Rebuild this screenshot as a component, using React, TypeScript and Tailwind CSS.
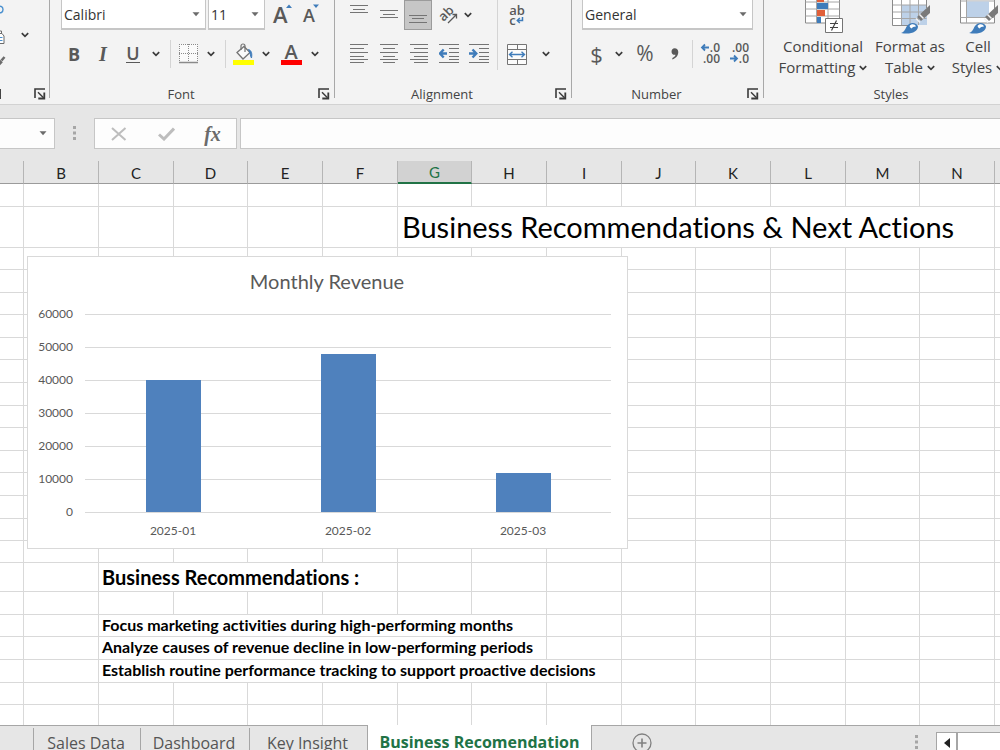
import React from 'react';
import clsx from 'clsx';

const UI_FONT = "font-['Open_Sans',sans-serif]";
const CELL_FONT = "font-['Lato',sans-serif] [font-variant-ligatures:none]";

const COLUMNS = ['A', 'B', 'C', 'D', 'E', 'F', 'G', 'H', 'I', 'J', 'K', 'L', 'M', 'N', 'O', 'P', 'Q', 'R'];
const ACTIVE_COLUMN = 'G';

interface SheetCell {
  start: number;
  span: number;
  text: string;
  className: string;
}

interface SheetRow {
  height: string;
  cell?: SheetCell;
}

const BODY_TEXT = 'text-[16px] leading-[18px] font-bold pl-[3px] pb-[2px]';

const ROWS: SheetRow[] = [
  { height: 'h-[23px]' },
  {
    height: 'h-[41px]',
    cell: { start: 6, span: 8, text: 'Business Recommendations & Next Actions', className: 'text-[29px] leading-[36px] pl-1' },
  },
  { height: 'h-[22px]' },
  { height: 'h-[23px]' },
  { height: 'h-[22px]' },
  { height: 'h-[23px]' },
  { height: 'h-[22px]' },
  { height: 'h-[23px]' },
  { height: 'h-[23px]' },
  { height: 'h-[22px]' },
  { height: 'h-[23px]' },
  { height: 'h-[22px]' },
  { height: 'h-[23px]' },
  { height: 'h-[23px]' },
  { height: 'h-[22px]' },
  { height: 'h-[22px]' },
  {
    height: 'h-[29px]',
    cell: { start: 2, span: 4, text: 'Business Recommendations :', className: 'text-[20px] leading-[26px] font-bold pl-[3px]' },
  },
  { height: 'h-[23px]' },
  {
    height: 'h-[22px]',
    cell: { start: 2, span: 6, text: 'Focus marketing activities during high-performing months', className: BODY_TEXT },
  },
  {
    height: 'h-[23px]',
    cell: { start: 2, span: 6, text: 'Analyze causes of revenue decline in low-performing periods', className: BODY_TEXT },
  },
  {
    height: 'h-[23px]',
    cell: { start: 2, span: 7, text: 'Establish routine performance tracking to support proactive decisions', className: BODY_TEXT },
  },
  { height: 'h-[22px]' },
  { height: 'h-[23px]' },
  { height: 'h-[23px]' },
];

const REVENUE = [
  { month: '2025-01', value: 40000 },
  { month: '2025-02', value: 48000 },
  { month: '2025-03', value: 12000 },
];

const columnWidth = (index: number) => {
  if (index === 0) return 'w-[24px]';
  return index % 3 === 0 ? 'w-[74px]' : 'w-[75px]';
};

const Chevron = () => (
  <svg width="8" height="6" viewBox="0 0 8 6" fill="none" stroke="#3b3b3b" strokeWidth="1.7" className="shrink-0">
    <path d="M0.8 1.2 4 4.4 7.2 1.2" />
  </svg>
);

const ChevronButton = ({ label, className }: { label: string; className: string }) => (
  <button aria-label={label} className={clsx('flex h-7 shrink-0 items-center justify-center', className)}>
    <Chevron />
  </button>
);

const IconButton = ({ label, className, children }: { label: string; className: string; children: React.ReactNode }) => (
  <button aria-label={label} className={clsx('flex h-7 shrink-0 items-center justify-center text-[#595959]', className)}>
    {children}
  </button>
);

const Separator = ({ className }: { className: string }) => (
  <div className={clsx('h-7 w-px shrink-0 bg-[#d4d4d4]', className)} />
);

const Divider = () => <div className="h-[98px] w-px shrink-0 bg-[#a8a8a8]" />;

const Launcher = ({ label }: { label: string }) => (
  <button aria-label={label} className="shrink-0">
    <svg width="12" height="12" viewBox="0 0 12 12" fill="none" stroke="#3a3a3a">
      <path d="M1 10V1h10" strokeWidth="1.6" />
      <path d="M4 4.2 9.5 9.7" strokeWidth="1.4" />
      <path d="M10.3 4.5v6H4.3" strokeWidth="1.8" />
    </svg>
  </button>
);

const GroupLabel = ({ name, launcher = true }: { name: string; launcher?: boolean }) => (
  <div className="mt-1.5 flex h-5 items-center">
    <span className="flex-1 text-center text-[13px] leading-5 text-[#444]">{name}</span>
    {launcher && (
      <div className="mr-1 ml-1.5 flex">
        <Launcher label={`${name} settings`} />
      </div>
    )}
  </div>
);

const Combo = ({ label, value, className }: { label: string; value: string; className: string }) => (
  <div className={clsx('relative h-[30px] shrink-0', className)}>
    <select
      aria-label={label}
      defaultValue={value}
      className="h-full w-full appearance-none border-x border-b-2 border-[#c6c6c6] bg-white pl-0.5 text-[14px] text-[#333]"
    >
      <option>{value}</option>
    </select>
    <svg width="8" height="5" className="pointer-events-none absolute top-3 right-1.5" fill="#6b6b6b">
      <path d="M0.5 0.3h7L4 4.3z" />
    </svg>
  </div>
);

const Lines = ({ rows }: { rows: [number, number, number][] }) => (
  <svg width="18" height="20" viewBox="0 0 18 20" stroke="#747474" strokeWidth="1">
    {rows.map(([x1, x2, y]) => (
      <path key={y} d={`M${x1} ${y + 0.5}H${x2}`} />
    ))}
  </svg>
);

const IndentIcon = ({ increase }: { increase?: boolean }) => (
  <svg width="20" height="20" viewBox="0 0 20 20" fill="none" stroke="#747474">
    <path d="M0 .5H20M10 4.5H20M10 8.5H20M10 12.5H20M0 18.5H20M10 15.5H20" />
    <path
      d={increase ? 'M0 9.5H6M3.5 5.5 7.3 9.5 3.5 13.5' : 'M8 9.5H2M4.7 5.5 .9 9.5 4.7 13.5'}
      stroke="#3f7cba"
      strokeWidth="2.4"
    />
  </svg>
);

const ClipboardGroup = () => (
  <div className="flex w-[49px] shrink-0 flex-col">
    <div className="flex h-[78px]">
      <svg width="16" height="78" viewBox="0 0 16 78" fill="none">
        <path d="M-2 6.5C1 5.5 3 7 3 9.5S1 13.5-2 12.5" stroke="#4a90cf" strokeWidth="1.4" />
        <path d="M-2 31H1.5v3M-2 33.5H2l2 2.500V43.500H-2" fill="#fff" stroke="#6b6b6b" />
        <path d="M0 37.5H2.5M0 40.5H2.5" stroke="#4a90cf" />
        <path d="M-2 65 1.500 61" stroke="#6b6b6b" strokeWidth="3.500" />
        <path d="M1.500 60.500 4.500 57" stroke="#6b6b6b" strokeWidth="2.500" />
      </svg>
      <div className="flex flex-col pt-[21px]">
        <ChevronButton label="Copy options" className="w-[17px]" />
      </div>
    </div>
    <div className="mt-1.5 flex h-5 items-center justify-between pr-[3px]">
      <span className="h-2.5 w-px bg-[#444]" />
      <Launcher label="Clipboard settings" />
    </div>
  </div>
);

const FontGroup = () => (
  <div className="flex w-[284px] shrink-0 flex-col">
    <div className="flex h-[30px] gap-0.5 pl-[11px]">
      <Combo label="Font" value="Calibri" className="w-[145px]" />
      <Combo label="Font size" value="11" className="w-[57px]" />
      <button aria-label="Increase font size" className="ml-1.5 flex w-[26px] text-[#595959]">
        <span className="text-[22px] leading-[29px] font-semibold">A</span>
        <svg width="6" height="10" className="-ml-0.5 shrink-0" fill="#3f7cba">
          <path d="M0 8 3 4.5 6 8z" />
        </svg>
      </button>
      <button aria-label="Decrease font size" className="ml-0.5 flex w-6 text-[#595959]">
        <span className="text-[18px] leading-[31px] font-semibold">A</span>
        <svg width="6" height="10" className="-ml-0.5 shrink-0" fill="#3f7cba">
          <path d="M0 4.5 3 8 6 4.5z" />
        </svg>
      </button>
    </div>
    <div className="flex h-12 items-center pl-[11px]">
      <IconButton label="Bold" className="w-[26px]">
        <span className="text-[18px] leading-[26px] font-bold">B</span>
      </IconButton>
      <IconButton label="Italic" className="w-8">
        <span className="font-['Liberation_Serif',serif] text-[20px] font-bold italic">I</span>
      </IconButton>
      <IconButton label="Underline" className="w-7">
        <span className="border-b border-[#595959] text-[18px] leading-[17px] font-semibold">U</span>
      </IconButton>
      <ChevronButton label="Underline options" className="w-[18px]" />
      <Separator className="ml-[5px]" />
      <IconButton label="Borders" className="w-[34px]">
        <svg width="19" height="20" viewBox="0 0 19 20" fill="none">
          <path d="M0 0h19v18H0z" fill="#fafafa" />
          <path d="M.5 0v18M18.5 0v18M9.5 0v18M0 .5h19M0 9.500h19" stroke="#8a8a8a" strokeDasharray="1 1" />
          <path d="M0 18.5h19" stroke="#8a8a8a" strokeWidth="1.5" />
        </svg>
      </IconButton>
      <ChevronButton label="Border options" className="w-3" />
      <Separator className="ml-2" />
      <IconButton label="Fill colour" className="w-[35px]">
        <svg width="21" height="22" viewBox="0 0 21 22" fill="none">
          <path d="M4 9.5 11 3.5 17 9.5 10 16z" fill="#fafafa" stroke="#747474" strokeWidth="1.3" />
          <path d="M8 7V3a2 2 0 0 1 4 0v6" stroke="#747474" strokeWidth="1.2" />
          <path d="M15.5 6.5c3 1 3.8 4 3 8.500-1.300-1.500-.5-4-3-8.500z" fill="#3f7cba" stroke="#3f7cba" />
          <path d="M0 17h21v5H0z" fill="#ffff00" />
        </svg>
      </IconButton>
      <ChevronButton label="Fill options" className="w-2.5" />
      <IconButton label="Font colour" className="w-10">
        <span className="flex w-[21px] flex-col items-center border-b-[5px] border-[#ff0000] text-[20px] leading-[17px] font-semibold">
          A
        </span>
      </IconButton>
      <ChevronButton label="Font colour options" className="w-2" />
    </div>
    <GroupLabel name="Font" />
  </div>
);

const AlignmentGroup = () => (
  <div className="flex w-[236px] shrink-0 flex-col">
    <div className="flex h-[78px] pl-[9px]">
      <div className="w-[153px]">
        <div className="flex h-[30px] items-center">
          <IconButton label="Top align" className="w-[30px]">
            <Lines rows={[[0, 18, 0], [3, 15, 4], [0, 18, 7]]} />
          </IconButton>
          <IconButton label="Middle align" className="w-[30px]">
            <Lines rows={[[0, 18, 5], [3, 15, 9], [0, 18, 12]]} />
          </IconButton>
          <button
            aria-label="Bottom align"
            aria-pressed="true"
            className="flex h-[30px] w-7 items-end justify-center border border-[#9b9b9b] bg-[#c6c6c6]"
          >
            <Lines rows={[[0, 18, 6], [3, 15, 9], [0, 18, 13]]} />
          </button>
          <IconButton label="Orientation" className="ml-0.5 w-[30px]">
            <svg width="20" height="20" viewBox="0 0 20 20" fill="none" stroke="#595959" className="overflow-visible">
              <text
                x="0"
                y="14"
                transform="rotate(-45 6 10)"
                fill="#595959"
                stroke="none"
                className="text-[13px] font-semibold"
              >
                ab
              </text>
              <path d="M9 18 17.500 9.500M13.500 9.500h4v4" strokeWidth="1.300" />
            </svg>
          </IconButton>
          <ChevronButton label="Orientation options" className="w-2" />
        </div>
        <div className="flex h-12 items-center">
          <IconButton label="Align left" className="w-[30px]">
            <Lines rows={[[0, 18, 0], [0, 14, 4], [0, 18, 8], [0, 14, 12], [0, 18, 15], [0, 14, 18]]} />
          </IconButton>
          <IconButton label="Centre" className="w-[30px]">
            <Lines rows={[[0, 18, 0], [3, 15, 4], [0, 18, 8], [3, 15, 12], [0, 18, 15], [3, 15, 18]]} />
          </IconButton>
          <IconButton label="Align right" className="w-[30px]">
            <Lines rows={[[0, 18, 0], [4, 18, 4], [0, 18, 8], [4, 18, 12], [0, 18, 15], [4, 18, 18]]} />
          </IconButton>
          <IconButton label="Decrease indent" className="w-[30px]">
            <IndentIcon />
          </IconButton>
          <IconButton label="Increase indent" className="w-[30px]">
            <IndentIcon increase />
          </IconButton>
        </div>
      </div>
      <div className="h-[70px] w-px bg-[#d4d4d4]" />
      <div>
        <div className="flex h-[30px] items-center">
          <IconButton label="Wrap text" className="w-[38px]">
            <span className="flex flex-col text-[13px] leading-[10px] font-semibold">
              <span>ab</span>
              <span className="flex items-center">
                c
                <svg width="8" height="8" viewBox="0 0 8 8" fill="none" stroke="#3f7cba" strokeWidth="1.500">
                  <path d="M6.500 1v3.500H1.500M3.800 2 1.300 4.500l2.500 2.500" />
                </svg>
              </span>
            </span>
          </IconButton>
        </div>
        <div className="flex h-12 items-center">
          <IconButton label="Merge cells" className="w-[38px]">
            <svg width="20" height="21" viewBox="0 0 20 21" fill="none" stroke="#747474">
              <path d="M.5.5h19v20H.5zM.5 5.500h19M.5 15.500h19M10.500 .5V5M10.500 15.500v5" fill="#fbfbfb" />
              <path d="M2.500 10.500h15M5.500 7.800 2.500 10.500l3 2.700M14.500 7.800l3 2.700-3 2.700" stroke="#3f7cba" strokeWidth="1.400" />
            </svg>
          </IconButton>
          <ChevronButton label="Merge options" className="w-5" />
        </div>
      </div>
    </div>
    <GroupLabel name="Alignment" />
  </div>
);

const DecimalIcon = ({ decrease }: { decrease?: boolean }) => (
  <svg
    width="20"
    height="22"
    viewBox="0 0 20 22"
    fill="#595959"
    className="overflow-visible text-[12px] font-semibold"
  >
    <text x="19" y="9" textAnchor="end">{decrease ? '.00' : '.0'}</text>
    <text x="19" y="20" textAnchor="end">{decrease ? '.0' : '.00'}</text>
    <path
      d={decrease ? 'M0 15.500h6M4 12.500l3 3-3 3' : 'M8 4.500H2M4 1.500l-3 3 3 3'}
      fill="none"
      stroke="#3f7cba"
      strokeWidth="1.800"
    />
  </svg>
);

const NumberGroup = () => (
  <div className="flex w-[191px] shrink-0 flex-col">
    <div className="h-[30px] pl-2.5">
      <Combo label="Number format" value="General" className="w-[171px]" />
    </div>
    <div className="flex h-12 items-center pl-2.5">
      <IconButton label="Accounting format" className="w-[29px]">
        <span className="text-[22px]">$</span>
      </IconButton>
      <ChevronButton label="Currency options" className="w-4" />
      <IconButton label="Percent style" className="w-9">
        <span className="text-[21px]">%</span>
      </IconButton>
      <IconButton label="Comma style" className="w-6">
        <svg width="8" height="12" viewBox="0 0 9 13" fill="#595959">
          <path d="M4 0c2.500 0 4.200 1.700 4.200 4.300C8.200 8.500 5.500 11.500 1.500 12.600V11c2.300-1 3.400-2.200 3.500-3.700C2.500 7.800.6 6.300.6 3.900.6 1.600 2 0 4 0z" />
        </svg>
      </IconButton>
      <Separator className="ml-[5px]" />
      <IconButton label="Increase decimal" className="w-9">
        <DecimalIcon />
      </IconButton>
      <IconButton label="Decrease decimal" className="w-[22px]">
        <DecimalIcon decrease />
      </IconButton>
    </div>
    <GroupLabel name="Number" />
  </div>
);

const Brush = () => (
  <>
    <path d="M40 5 27 17l4 4 9-8z" fill="#7a7a7a" />
    <path d="m29.500 14.500 4 4M26 18.500l4 4" stroke="#f3f3f3" strokeWidth="1.500" />
    <path d="M11 33c4-1.500 4-4 6-7 3-4.500 10-3.500 11 .5C28 31.500 21 35 11 33z" fill="#3f7cba" />
    <path d="M19.500 26c1.500-2.500 5.500-2.500 6.500 .5-2.500 0-3.500.8-4.500 2-1-.5-1.500-1.300-2-2.500z" fill="#fff" />
  </>
);

const StyleButton = ({ lines, className, children }: { lines: [string, string]; className: string; children: React.ReactNode }) => (
  <button className={clsx('flex shrink-0 flex-col items-center text-[15px] leading-[21px] whitespace-nowrap text-[#444]', className)}>
    <span className="flex h-[38px]">{children}</span>
    <span>{lines[0]}</span>
    <span className="flex items-center gap-1">
      {lines[1]}
      <Chevron />
    </span>
  </button>
);

const StylesGroup = () => (
  <div className="flex shrink-0 flex-col pl-[9px]">
    <div className="flex h-[78px]">
      <StyleButton lines={['Conditional', 'Formatting']} className="w-[100px]">
        <svg width="40" height="34" viewBox="0 0 40 34" fill="none">
          <path d="M2.500-4h34v27h-34z" fill="#fff" stroke="#8a8a8a" />
          <path d="M2.500 2h34M2.500 9h34M2.500 16h34M13.500-4v27M25 0v23" stroke="#a6a6a6" />
          <path d="M14 0h7v2h-7zM14 10h8v6h-8z" fill="#e0603a" />
          <path d="M14 3h11v6H14zM14 17h4v6h-4z" fill="#3f7cba" />
          <path d="M22.500 18.500h17v14h-17z" fill="#fff" stroke="#747474" />
          <path d="M27 23.500h8M27 27.500h8M33.500 20.500l-5 10" stroke="#444" strokeWidth="1.200" />
        </svg>
      </StyleButton>
      <StyleButton lines={['Format as', 'Table']} className="w-[74px]">
        <svg width="40" height="34" viewBox="0 0 40 34" fill="none">
          <path d="M2.500-4h34v29h-34z" fill="#fff" />
          <path d="M12 5h25v20H12z" fill="#bdd1e8" />
          <path d="M2.500 5h34M2.500 12h34M2.500 18.500h34M11.500-4v29M20-4v29M28.500-4v29" stroke="#a6a6a6" />
          <path d="M2.500-4v29.500H20M36.500-4v12" stroke="#8a8a8a" />
          <Brush />
        </svg>
      </StyleButton>
      <StyleButton lines={['Cell', 'Styles']} className="w-[62px]">
        <svg width="40" height="34" viewBox="0 0 40 34" fill="none">
          <path d="M2.500-4h34v27h-34z" fill="#fff" stroke="#8a8a8a" />
          <path d="M2.500 1h34M8.500-4v27M2.500 17.500h34" stroke="#a6a6a6" />
          <path d="M9 1.500h22V17H9z" fill="#bdd1e8" />
          <Brush />
        </svg>
      </StyleButton>
    </div>
    <GroupLabel name="Styles" launcher={false} />
  </div>
);

const Dots = () => (
  <svg width="3" height="15" fill="#a6a6a6">
    <path d="M0 0h3v3H0zM0 5.500h3v3H0zM0 11h3v3H0z" />
  </svg>
);

const FormulaBar = () => (
  <div className="flex h-14 shrink-0 items-start bg-[#e6e6e6] pt-[13px]">
    <div className="flex h-[31px] w-[55px] shrink-0 items-center justify-end border border-l-0 border-[#c6c6c6] bg-[#fdfdfd] pr-[7px]">
      <button aria-label="Name box">
        <svg width="8" height="5" fill="#6b6b6b">
          <path d="M0.500 0.300h7L4 4.300z" />
        </svg>
      </button>
    </div>
    <div className="flex h-[31px] w-[39px] shrink-0 items-center justify-center">
      <Dots />
    </div>
    <div className="flex h-[31px] w-[143px] shrink-0 items-center border border-[#c6c6c6] bg-[#fdfdfd]">
      <button aria-label="Cancel" className="flex w-[47px] justify-center">
        <svg width="16" height="14" viewBox="0 0 16 14" stroke="#bdbdbd" strokeWidth="2">
          <path d="M1 1 14.500 13M14.500 1 1 13" />
        </svg>
      </button>
      <button aria-label="Enter" className="flex w-12 justify-center">
        <svg width="17" height="14" viewBox="0 0 17 14" fill="none" stroke="#bdbdbd" strokeWidth="3">
          <path d="M1 7.500 6 12 16 1.500" />
        </svg>
      </button>
      <button
        aria-label="Insert function"
        className="flex w-[45px] justify-center font-['Liberation_Serif',serif] text-[20px] leading-[24px] font-bold text-[#6b6b6b] italic"
      >
        fx
      </button>
    </div>
    <input
      aria-label="Formula bar"
      className="ml-[3px] h-[31px] min-w-0 flex-1 border border-r-0 border-[#c6c6c6] bg-[#fdfdfd] px-2 text-[14px]"
    />
  </div>
);

const RevenueChart = () => {
  const base = 256;
  return (
    <svg width="602" height="294" viewBox="0 0 602 294" className={CELL_FONT} role="img" aria-label="Monthly Revenue">
      <rect x=".5" y=".5" width="600" height="292" fill="#fff" stroke="#d9d9d9" />
      <text x="300" y="33" textAnchor="middle" fill="#595959" className="text-[20px]">
        Monthly Revenue
      </text>
      {[0, 10000, 20000, 30000, 40000, 50000, 60000].map((tick) => {
        const y = base - (tick / 10000) * 33;
        return (
          <g key={tick}>
            <path d={`M58 ${y + 0.5}H584`} stroke="#d9d9d9" />
            <text x="46" y={y + 4} textAnchor="end" fill="#595959" className="text-[12px]">
              {tick}
            </text>
          </g>
        );
      })}
      {REVENUE.map(({ month, value }, i) => {
        const centre = 146 + i * 175;
        const height = Math.floor((value / 10000) * 33);
        return (
          <g key={month}>
            <rect x={centre - 27} y={base - height} width="55" height={height} fill="#4f81bd" />
            <text x={centre} y="279" textAnchor="middle" fill="#595959" className="text-[12px]">
              {month}
            </text>
          </g>
        );
      })}
    </svg>
  );
};

const Cells = ({ row }: { row: SheetRow }) => {
  const cells: React.ReactNode[] = [];
  for (let i = 0; i < COLUMNS.length; i++) {
    const cell = row.cell;
    if (cell && cell.start === i) {
      cells.push(
        <td
          key={i}
          colSpan={cell.span}
          className={clsx('border-r border-b border-[#d9d9d9] align-middle whitespace-nowrap text-black', cell.className)}
        >
          {cell.text}
        </td>,
      );
      i += cell.span - 1;
    } else {
      cells.push(<td key={i} className="border-r border-b border-[#d9d9d9] p-0" />);
    }
  }
  return <>{cells}</>;
};

const Sheet = () => (
  <main className="relative min-h-0 flex-1 overflow-hidden bg-white">
    <table className={clsx('w-max table-fixed border-separate border-spacing-0', CELL_FONT)}>
      <colgroup>
        {COLUMNS.map((name, i) => (
          <col key={name} className={columnWidth(i)} />
        ))}
      </colgroup>
      <thead>
        <tr className="h-[23px]">
          {COLUMNS.map((name, i) => (
            <th
              key={name}
              scope="col"
              className={clsx(
                'border-r p-0 text-[15px] leading-[20px] font-normal',
                columnWidth(i),
                name === ACTIVE_COLUMN
                  ? 'border-b-2 border-r-[#b5b5b5] border-b-[#217346] bg-[#d2d2d2] pt-px text-[#217346]'
                  : 'border-b border-r-[#b5b5b5] border-b-[#9b9b9b] bg-[#e6e6e6] pt-0.5 text-[#222]',
              )}
            >
              {i > 0 && name}
            </th>
          ))}
        </tr>
      </thead>
      <tbody>
        {ROWS.map((row, i) => (
          <tr key={i} className={row.height}>
            <Cells row={row} />
          </tr>
        ))}
      </tbody>
    </table>
    {/* the chart floats over the cells */}
    <div className="absolute top-[95px] left-[27px]">
      <RevenueChart />
    </div>
  </main>
);

const Tab = ({ name, className }: { name: string; className: string }) => (
  <button
    role="tab"
    aria-selected="false"
    className={clsx('h-8 shrink-0 border-t border-[#a6a6a6] text-[16px] whitespace-nowrap text-[#555]', className)}
  >
    <span className="mt-0.5 flex h-[30px] items-center justify-center border-l border-[#a6a6a6] pr-0.5">{name}</span>
  </button>
);

const SheetTabs = () => (
  <footer className="flex h-[25px] shrink-0 items-start overflow-hidden bg-[#e6e6e6]">
    <div className="w-[33px] shrink-0 border-t border-[#a6a6a6]" />
    <div role="tablist" className="flex shrink-0">
      <Tab name="Sales Data" className="w-[107px]" />
      <Tab name="Dashboard" className="w-[109px]" />
      <Tab name="Key Insight" className="w-[118px]" />
      <button
        role="tab"
        aria-selected="true"
        className="h-[34px] w-[225px] shrink-0 border-x border-[#a6a6a6] bg-white text-[16px] font-bold whitespace-nowrap text-[#217346]"
      >
        Business Recomendation
      </button>
    </div>
    <div className="flex h-[34px] flex-1 items-center border-t border-[#a6a6a6]">
      <button aria-label="New sheet" className="ml-10">
        <svg width="20" height="20" viewBox="0 0 20 20" fill="none" stroke="#808080">
          <circle cx="10" cy="10" r="9" strokeWidth="1.300" />
          <path d="M5.500 10h9M10 5.500v9" strokeWidth="1.600" />
        </svg>
      </button>
      <div className="mr-[18px] ml-auto">
        <Dots />
      </div>
      <div className="flex h-[22px] shrink-0 border-y border-l border-[#a6a6a6] bg-white">
        <button aria-label="Scroll left" className="flex w-[21px] items-center justify-center border-r-2 border-[#a6a6a6]">
          <svg width="6" height="10" fill="#222">
            <path d="M6 0v10L0 5z" />
          </svg>
        </button>
        <div className="w-[42px]" />
      </div>
    </div>
  </footer>
);

export default function App() {
  return (
    <div className={clsx('flex h-screen flex-col overflow-hidden bg-[#e6e6e6]', UI_FONT)}>
      <header className="flex h-[105px] shrink-0 overflow-hidden border-b border-[#d2d2d2] bg-[#f3f3f3]">
        <ClipboardGroup />
        <Divider />
        <FontGroup />
        <Divider />
        <AlignmentGroup />
        <Divider />
        <NumberGroup />
        <Divider />
        <StylesGroup />
      </header>
      <FormulaBar />
      <Sheet />
      <SheetTabs />
    </div>
  );
}
